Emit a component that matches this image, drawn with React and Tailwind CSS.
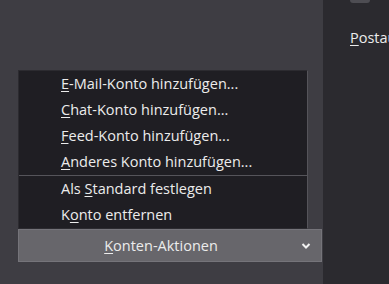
import React from "react";

const font = { fontFamily: '"Open Sans", "Noto Sans", sans-serif' };

function Item({ pre, u, post }) {
  return (
    <div className="h-[26px] flex items-center pl-[42px] text-[14.5px] text-[#ececec] leading-none">
      <span>
        {pre}
        <span className="underline underline-offset-[2px] decoration-1">{u}</span>
        {post}
      </span>
    </div>
  );
}

export default function App() {
  return (
    <div className="flex w-[389px] h-[284px] overflow-hidden" style={font}>
      <div className="w-[323px] h-full bg-[#3e3d43] pt-[70px] pl-[18px]">
        <div className="w-[290px] bg-[#1f1e23] border border-[#2c2b30] border-r-[#55545a]">
          <div>
            <Item pre="" u="E" post="-Mail-Konto hinzufügen..." />
            <Item pre="" u="C" post="hat-Konto hinzufügen..." />
            <Item pre="" u="F" post="eed-Konto hinzufügen..." />
            <Item pre="" u="A" post="nderes Konto hinzufügen..." />
          </div>
          <div className="h-px bg-[#55545a]" />
          <div>
            <Item pre="Als " u="S" post="tandard festlegen" />
            <Item pre="K" u="o" post="nto entfernen" />
          </div>
        </div>
        <div className="w-[304px] h-[33px] bg-[#67666b] border border-[#75747a] flex items-center text-[14.5px] text-[#ececec]">
          <div className="flex-1 flex justify-center pl-[2px]">
            <span>
              <span className="underline underline-offset-[2px] decoration-1">K</span>onten-Aktionen
            </span>
          </div>
          <svg width="10" height="8" viewBox="0 0 10 8" className="mr-[10px]">
            <polyline points="1.5,2 5,5.5 8.5,2" fill="none" stroke="#f2f2f2" strokeWidth="2" />
          </svg>
        </div>
      </div>
      <div className="flex-1 h-full bg-[#2b2a2f] overflow-hidden">
        <div className="ml-[27px] w-[20px] h-[3px] bg-[#4e4d53] rounded-b-[3px]" />
        <div className="mt-[24px] ml-[27px] text-[14.5px] text-[#ececec] whitespace-nowrap">
          <span className="underline underline-offset-[2px] decoration-1">P</span>ostausgang
        </div>
      </div>
    </div>
  );
}
